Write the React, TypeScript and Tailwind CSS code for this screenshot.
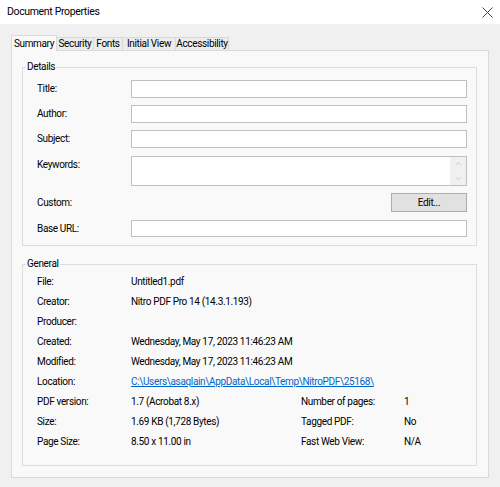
import { ChevronDown, ChevronUp } from "lucide-react";

const tabs = [
  { name: "Security", w: "w-[38px]" },
  { name: "Fonts", w: "w-[30px]" },
  { name: "Initial View", w: "w-[54px]" },
  { name: "Accessibility", w: "w-[54px]" },
];

const Row = ({ label, children }: { label: string; children?: React.ReactNode }) => (
  <div className="flex h-[20px] items-center">
    <span className="w-[94px] shrink-0">{label}</span>
    {children}
  </div>
);

export default function App() {
  return (
    <div
      className="flex h-[487px] w-[500px] flex-col bg-[#f0f0f0] text-[10px] leading-[14px] tracking-[-0.35px] text-black"
      style={{ fontFamily: 'Roboto, "Noto Sans", sans-serif' }}
    >
      {/* title bar */}
      <div className="flex h-[24px] shrink-0 items-center justify-between bg-white pl-[7px] pr-[6px]">
        <span className="text-[10.5px]">Document Properties</span>
        <svg width="11" height="11" viewBox="0 0 11 11" className="mr-[1px]">
          <path d="M0.5 0.5 L10.5 10.5 M10.5 0.5 L0.5 10.5" stroke="#444" strokeWidth="1" />
        </svg>
      </div>

      <div className="flex flex-1 flex-col px-[11px] pt-[11px] pb-[9px]">
        {/* tab strip */}
        <div className="relative z-10 flex h-[15px] items-end">
          <div className="-mb-[1px] flex h-[16px] w-[46px] items-center justify-center border border-b-0 border-[#d9d9d9] bg-[#f9f9f9]">
            Summary
          </div>
          {tabs.map((t) => (
            <div
              key={t.name}
              className={`-ml-[1px] flex h-[13px] items-center justify-center border border-b-0 border-[#d9d9d9] bg-[#ececec] ${t.w}`}
            >
              {t.name}
            </div>
          ))}
        </div>

        {/* tab panel */}
        <div className="flex flex-1 flex-col border border-[#d9d9d9] bg-[#f9f9f9] pt-[9px] pr-[11px] pb-[11px] pl-[10px]">
          <fieldset className="border border-[#dcdcdc]">
            <legend className="ml-[3px] px-[1px]">Details</legend>
            <div className="flex flex-col pt-[6px] pr-[9px] pb-[8px] pl-[14px]">
              <div className="flex items-center">
                <span className="w-[94px] shrink-0">Title:</span>
                <div className="h-[18px] flex-1 border border-[#bfbfbf] bg-white" />
              </div>
              <div className="mt-[7px] flex items-center">
                <span className="w-[94px] shrink-0">Author:</span>
                <div className="h-[18px] flex-1 border border-[#bfbfbf] bg-white" />
              </div>
              <div className="mt-[7px] flex items-center">
                <span className="w-[94px] shrink-0">Subject:</span>
                <div className="h-[18px] flex-1 border border-[#bfbfbf] bg-white" />
              </div>
              <div className="mt-[8px] flex items-start">
                <span className="w-[94px] shrink-0 pt-[2px]">Keywords:</span>
                <div className="flex h-[30px] flex-1 border border-[#bfbfbf] bg-white">
                  <div className="flex-1" />
                  <div className="flex w-[16px] flex-col items-center justify-between bg-[#f0f0f0] py-[2px]">
                    <ChevronUp size={9} color="#bdbdbd" strokeWidth={2} />
                    <ChevronDown size={9} color="#bdbdbd" strokeWidth={2} />
                  </div>
                </div>
              </div>
              <div className="mt-[7px] flex items-center">
                <span className="w-[94px] shrink-0">Custom:</span>
                <div className="flex-1" />
                <button
                  type="button"
                  className="flex h-[19px] w-[76px] items-center justify-center border border-[#adadad] bg-[#e1e1e1]"
                >
                  Edit...
                </button>
              </div>
              <div className="mt-[8px] flex items-center">
                <span className="w-[94px] shrink-0">Base URL:</span>
                <div className="h-[17px] flex-1 border border-[#bfbfbf] bg-white" />
              </div>
            </div>
          </fieldset>

          <fieldset className="mt-[11px] flex-1 border border-[#dcdcdc]">
            <legend className="ml-[3px] px-[1px]">General</legend>
            <div className="flex flex-col pt-[1px] pl-[14px]">
              <Row label="File:">Untitled1.pdf</Row>
              <Row label="Creator:">Nitro PDF Pro 14 (14.3.1.193)</Row>
              <Row label="Producer:" />
              <Row label="Created:">Wednesday, May 17, 2023 11:46:23 AM</Row>
              <Row label="Modified:">Wednesday, May 17, 2023 11:46:23 AM</Row>
              <Row label="Location:">
                <a href="#" className="text-[#0066cc] underline">
                  C:\Users\asaqlain\AppData\Local\Temp\NitroPDF\25168\
                </a>
              </Row>
              <Row label="PDF version:">
                <span className="w-[170px] shrink-0">1.7 (Acrobat 8.x)</span>
                <span className="w-[103px] shrink-0">Number of pages:</span>
                <span>1</span>
              </Row>
              <Row label="Size:">
                <span className="w-[170px] shrink-0">1.69 KB (1,728 Bytes)</span>
                <span className="w-[103px] shrink-0">Tagged PDF:</span>
                <span>No</span>
              </Row>
              <Row label="Page Size:">
                <span className="w-[170px] shrink-0">8.50 x 11.00 in</span>
                <span className="w-[103px] shrink-0">Fast Web View:</span>
                <span>N/A</span>
              </Row>
            </div>
          </fieldset>
        </div>
      </div>
    </div>
  );
}
